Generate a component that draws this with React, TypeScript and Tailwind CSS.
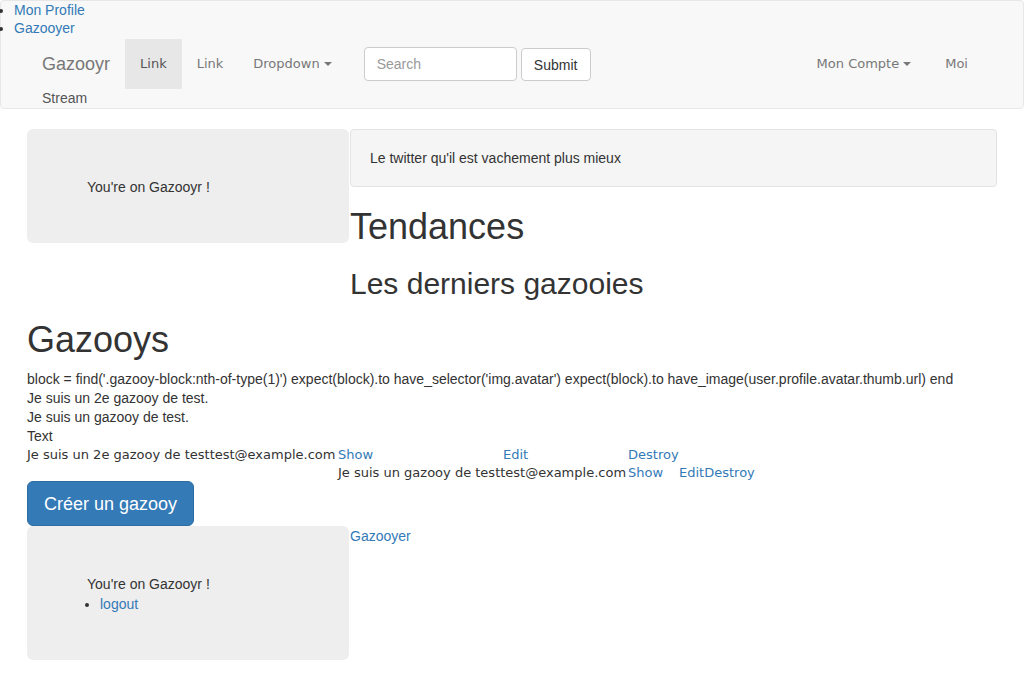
import React from "react";

const HV = { fontFamily: '"Liberation Sans", Arial, sans-serif' };
const VD = { fontFamily: '"DejaVu Sans", Verdana, sans-serif' };

function Caret() {
  return (
    <span className="inline-block ml-[4px] align-middle w-0 h-0 border-t-[4px] border-t-current border-x-[4px] border-x-transparent" />
  );
}

export default function App() {
  return (
    <div className="bg-white text-[#333] text-[14px] leading-[20px] w-[1024px] min-h-[690px]" style={HV}>
      {/* Navbar */}
      <div className="bg-[#f8f8f8] border border-[#e7e7e7] rounded-[4px] h-[109px]">
        <ul className="list-disc pl-[13px] leading-[18px] text-[#337ab7] marker:text-[#333]">
          <li>Mon Profile</li>
          <li>Gazooyer</li>
        </ul>
        <div className="mt-[2px] px-[26px]">
          <div className="flex h-[50px] items-stretch">
            <div className="px-[15px] flex items-center text-[18px] text-[#777]">Gazooyr</div>
            <div className="px-[15px] flex items-center bg-[#e7e7e7] text-[#555] text-[13px]" style={VD}>Link</div>
            <div className="px-[15px] flex items-center text-[#777] text-[13px]" style={VD}>Link</div>
            <div className="px-[15px] flex items-center text-[#777] text-[13px]" style={VD}>
              Dropdown<Caret />
            </div>
            <div className="pl-[17px] flex items-start pt-[8px] gap-[4px]">
              <div className="w-[153px] h-[34px] bg-white border border-[#ccc] rounded-[4px] px-[12px] flex items-center text-[#999]">
                Search
              </div>
              <div className="h-[33px] w-[70px] bg-white border border-[#ccc] rounded-[4px] flex items-center justify-center text-[#333] mt-[1px]">
                Submit
              </div>
            </div>
            <div className="ml-auto flex items-stretch mr-[14px]">
              <div className="px-[15px] flex items-center text-[#777] text-[13px]" style={VD}>
                Mon Compte<Caret />
              </div>
              <div className="px-[15px] ml-[4px] flex items-center text-[#777] text-[13px]" style={VD}>Moi</div>
            </div>
          </div>
          <div className="px-[15px] text-[#555] leading-[20px] -mt-[1px]">Stream</div>
        </div>
      </div>

      {/* Content */}
      <div className="px-[27px] mt-[20px]">
        <div className="flex items-start">
          <div className="w-[322px] shrink-0 bg-[#eee] rounded-[6px] px-[60px] pt-[48px] pb-[46px]">
            You're on Gazooyr !
          </div>
          <div className="ml-[1px] flex-1">
            <div className="bg-[#f5f5f5] border border-[#e3e3e3] rounded-[4px] px-[19px] py-[18px]">
              Le twitter qu'il est vachement plus mieux
            </div>
            <h1 className="text-[36px] leading-[40px] mt-[20px] mb-[10px] font-normal">Tendances</h1>
            <h2 className="text-[30px] leading-[33px] mt-[20px] font-normal">Les derniers gazooies</h2>
          </div>
        </div>

        <h1 className="text-[36px] leading-[40px] mt-[20px] mb-[10px] font-normal">Gazooys</h1>
        <div className="leading-[19px]">
          <div>block = find('.gazooy-block:nth-of-type(1)') expect(block).to have_selector('img.avatar') expect(block).to have_image(user.profile.avatar.thumb.url) end</div>
          <div>Je suis un 2e gazooy de test.</div>
          <div>Je suis un gazooy de test.</div>
          <div>Text</div>
          <div className="flex text-[13px] leading-[18px]" style={VD}>
            <span className="w-[311px] shrink-0 whitespace-nowrap">Je suis un 2e gazooy de testtest@example.com</span>
            <span className="w-[165px] shrink-0 text-[#337ab7]">Show</span>
            <span className="w-[125px] shrink-0 text-[#337ab7]">Edit</span>
            <span className="text-[#337ab7]">Destroy</span>
          </div>
          <div className="flex text-[13px] leading-[18px]" style={VD}>
            <span className="w-[311px] shrink-0" />
            <span className="w-[290px] shrink-0 whitespace-nowrap">Je suis un gazooy de testtest@example.com</span>
            <span className="w-[51px] shrink-0 text-[#337ab7]">Show</span>
            <span className="text-[#337ab7]">Edit</span>
            <span className="text-[#337ab7]">Destroy</span>
          </div>
        </div>

        <div className="-mt-[1px] flex w-fit items-center h-[45px] px-[16px] bg-[#337ab7] border border-[#2e6da4] rounded-[6px] text-white text-[18px]">
          Créer un gazooy
        </div>

        <div className="flex items-start">
          <div className="w-[322px] shrink-0 bg-[#eee] rounded-[6px] px-[60px] pt-[48px] pb-[46px]">
            <div>You're on Gazooyr !</div>
            <ul className="list-disc pl-[13px]">
              <li className="text-[#337ab7] marker:text-[#333]">logout</li>
            </ul>
          </div>
          <div className="ml-[1px] text-[#337ab7]">Gazooyer</div>
        </div>
      </div>
    </div>
  );
}
